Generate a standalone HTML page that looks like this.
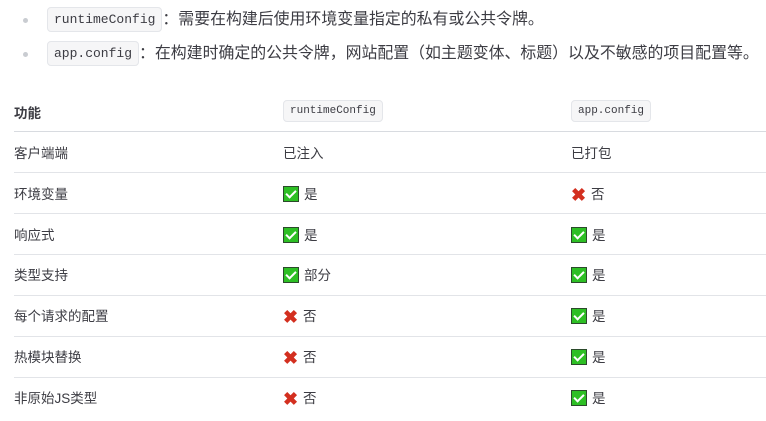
<!DOCTYPE html>
<html><head><meta charset="utf-8"><style>
body{margin:0;width:766px;height:421px;background:#fff;font-family:"Liberation Sans","Noto Sans CJK SC",sans-serif;color:#3c3c43;position:relative;overflow:hidden}
.a{position:absolute;white-space:nowrap}
.dot{position:absolute;width:5px;height:5px;border-radius:50%;background:#c9ccd1}
code{font-family:"Liberation Mono","DejaVu Sans Mono",monospace;background:#f6f6f7;border:1px solid #e4e6ea;border-radius:4px;color:#3c3c43}
.big code{font-size:13px;padding:4px 6px;vertical-align:1px}
.sm code{font-size:11px;padding:4px 6px}
.line{position:absolute;left:14px;right:0;height:1px;background:#e2e4e8}
.t{font-size:13.5px}
.ck{display:inline-block;width:14px;height:14px;background:#2dbf24;border:1px solid #2b4a2b;vertical-align:-3px;margin-right:5px;position:relative}
.ck::after{content:"";position:absolute;left:4px;top:1px;width:4px;height:8px;border:solid #fff;border-width:0 2px 2px 0;transform:rotate(45deg)}
.x{display:inline-block;color:#d32f1f;font-weight:bold;font-size:18px;vertical-align:-2px;margin-right:4px;width:16px}
</style></head><body>
<div class="dot" style="left:23px;top:18px"></div>
<div class="dot" style="left:23px;top:52px"></div>
<div class="a big" style="left:47px;top:8px;font-size:15.9px;line-height:24px"><code>runtimeConfig</code>：需要在构建后使用环境变量指定的私有或公共令牌。</div>
<div class="a big" style="left:47px;top:42px;font-size:15.9px;line-height:24px"><code>app.config</code>：在构建时确定的公共令牌，网站配置（如主题变体、标题）以及不敏感的项目配置等。</div>

<div class="a t" style="left:14px;top:102px;font-weight:bold">功能</div>
<div class="a sm" style="left:283px;top:100px"><code>runtimeConfig</code></div>
<div class="a sm" style="left:571px;top:100px"><code>app.config</code></div>
<div class="line" style="top:131px;background:#d8dbe0"></div>

<div class="a t" style="left:14px;top:142px">客户端端</div><div class="a t" style="left:283px;top:142px">已注入</div><div class="a t" style="left:571px;top:142px">已打包</div>
<div class="line" style="top:172px"></div>
<div class="a t" style="left:14px;top:183px">环境变量</div><div class="a t" style="left:283px;top:183px"><span class="ck"></span>是</div><div class="a t" style="left:571px;top:183px"><span class="x">✖</span>否</div>
<div class="line" style="top:213px"></div>
<div class="a t" style="left:14px;top:224px">响应式</div><div class="a t" style="left:283px;top:224px"><span class="ck"></span>是</div><div class="a t" style="left:571px;top:224px"><span class="ck"></span>是</div>
<div class="line" style="top:254px"></div>
<div class="a t" style="left:14px;top:264px">类型支持</div><div class="a t" style="left:283px;top:264px"><span class="ck"></span>部分</div><div class="a t" style="left:571px;top:264px"><span class="ck"></span>是</div>
<div class="line" style="top:295px"></div>
<div class="a t" style="left:14px;top:305px">每个请求的配置</div><div class="a t" style="left:283px;top:305px"><span class="x">✖</span>否</div><div class="a t" style="left:571px;top:305px"><span class="ck"></span>是</div>
<div class="line" style="top:336px"></div>
<div class="a t" style="left:14px;top:346px">热模块替换</div><div class="a t" style="left:283px;top:346px"><span class="x">✖</span>否</div><div class="a t" style="left:571px;top:346px"><span class="ck"></span>是</div>
<div class="line" style="top:377px"></div>
<div class="a t" style="left:14px;top:387px">非原始JS类型</div><div class="a t" style="left:283px;top:387px"><span class="x">✖</span>否</div><div class="a t" style="left:571px;top:387px"><span class="ck"></span>是</div>
</body></html>
